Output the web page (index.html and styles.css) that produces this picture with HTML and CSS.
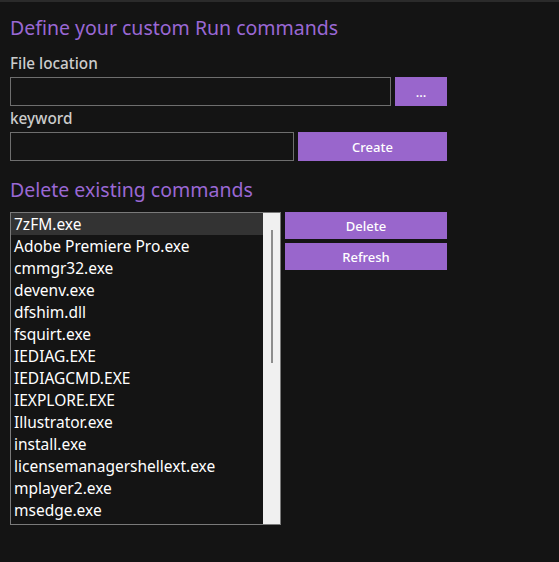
FILE: index.html
```html
<!DOCTYPE html>
<html>
<head>
<meta charset="utf-8">
<link rel="stylesheet" href="styles.css">
</head>
<body>
<div class="topbar"></div>
<div class="main">
  <h1 class="title">Define your custom Run commands</h1>
  <div class="label label-first">File location</div>
  <div class="row">
    <div class="input input-file"></div>
    <button class="btn btn-browse">...</button>
  </div>
  <div class="label">keyword</div>
  <div class="row">
    <div class="input input-key"></div>
    <button class="btn btn-create">Create</button>
  </div>
  <h2 class="title title-second">Delete existing commands</h2>
  <div class="row row-list">
    <div class="list">
      <div class="items">
        <div class="item selected">7zFM.exe</div>
        <div class="item">Adobe Premiere Pro.exe</div>
        <div class="item">cmmgr32.exe</div>
        <div class="item">devenv.exe</div>
        <div class="item">dfshim.dll</div>
        <div class="item">fsquirt.exe</div>
        <div class="item">IEDIAG.EXE</div>
        <div class="item">IEDIAGCMD.EXE</div>
        <div class="item">IEXPLORE.EXE</div>
        <div class="item">Illustrator.exe</div>
        <div class="item">install.exe</div>
        <div class="item">licensemanagershellext.exe</div>
        <div class="item">mplayer2.exe</div>
        <div class="item">msedge.exe</div>
      </div>
      <div class="scrollbar"><div class="thumb"></div></div>
    </div>
    <div class="side">
      <button class="btn btn-side">Delete</button>
      <button class="btn btn-side">Refresh</button>
    </div>
  </div>
</div>
</body>
</html>
```
FILE: styles.css
```css
html, body {
  margin: 0;
  padding: 0;
  background: #141414;
  height: 100%;
}
body {
  font-family: "Noto Sans", "Open Sans", sans-serif;
  color: #ffffff;
}
.topbar {
  height: 2px;
  background: #2b2b2b;
}
.main {
  padding-left: 10px;
  width: 437px;
}
.title {
  margin: 14px 0 0 0;
  font-size: 19.5px;
  line-height: 24px;
  font-weight: 400;
  color: #9a68d4;
}
.title-second {
  margin-top: 17px;
  margin-bottom: 10px;
}
.label {
  font-size: 15.3px;
  font-weight: 500;
  line-height: 22px;
  color: #cccccc;
  margin-top: 1px;
  margin-bottom: 3px;
}
.label-first {
  margin-top: 12px;
}
.row {
  display: flex;
  gap: 4px;
}
.input {
  height: 27px;
  border: 1px solid #6e6e6e;
  background: #141414;
}
.input-file { width: 379px; }
.input-key { width: 282px; }
.btn {
  border: none;
  margin: 0;
  padding: 0;
  background: #9966cc;
  color: #ffffff;
  font-family: "Noto Sans", "Open Sans", sans-serif;
  font-size: 13px;
  font-weight: 500;
}
.btn-browse { width: 52px; height: 29px; }
.btn-create { width: 149px; height: 29px; }
.list {
  width: 269px;
  height: 311px;
  border: 1px solid #7a7a7a;
  display: flex;
  overflow: hidden;
}
.items {
  flex: 1;
}
.item {
  height: 22px;
  line-height: 22px;
  padding-left: 3px;
  font-size: 15.5px;
  white-space: nowrap;
}
.selected {
  background: #333333;
}
.scrollbar {
  width: 17px;
  background: #f0f0f0;
  position: relative;
}
.thumb {
  position: absolute;
  left: 8px;
  top: 17px;
  width: 2px;
  height: 133px;
  background: #8c8c8c;
}
.side {
  display: flex;
  flex-direction: column;
  gap: 4px;
}
.btn-side {
  width: 162px;
  height: 27px;
}
```
